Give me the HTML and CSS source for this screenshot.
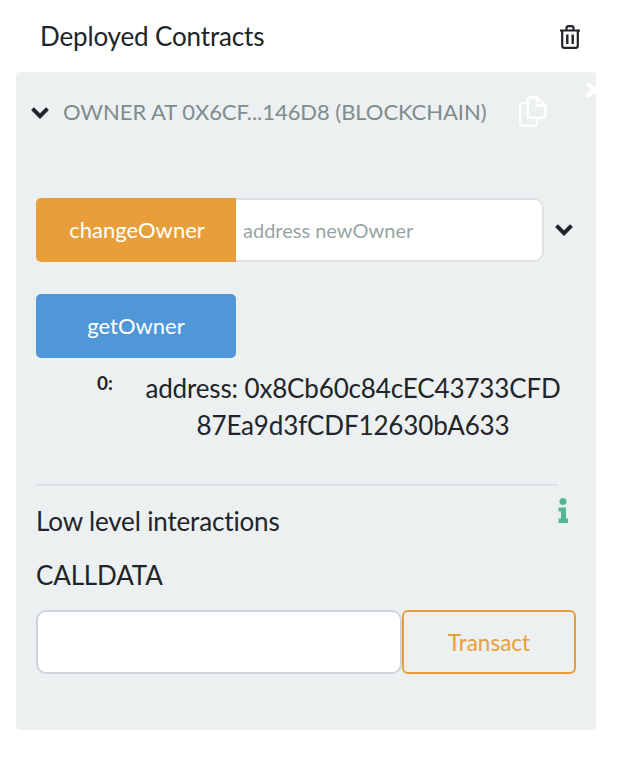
FILE: index.html
```html
<!DOCTYPE html>
<html lang="en">
  <head>
    <meta charset="UTF-8" />
    <meta name="viewport" content="width=device-width, initial-scale=1.0" />
    <title>Deployed Contracts</title>
    <link rel="stylesheet" href="styles.css">
  </head>
  <body>
    <div class="header">
      <div class="header-title">Deployed Contracts</div>
      <svg class="trash-icon" viewBox="0 0 22 24" width="22" height="24">
        <path d="M1 5.5h20M7.5 5V3.2C7.5 2 8.3 1.2 9.5 1.2h3c1.2 0 2 .8 2 2V5M3.2 5.5v15.3c0 1.2.8 2 2 2h11.6c1.2 0 2-.8 2-2V5.500" fill="none" stroke="#212529" stroke-width="2.200" />
        <path d="M8.300 9.500v9.500M13.700 9.500v9.500" fill="none" stroke="#212529" stroke-width="2.400" />
      </svg>
    </div>

    <div class="contract">
      <!-- close button, cut off by the panel edge -->
      <svg class="close-icon" viewBox="0 0 16 16" width="16" height="16">
        <path d="M2.500 2.500l11 11M13.500 2.500l-11 11" fill="none" stroke="#fff" stroke-width="4" stroke-linecap="round" />
      </svg>

      <div class="contract-title">
        <svg class="chevron" viewBox="0 0 20 13" width="20" height="13">
          <path d="M2.500 2.700l7.500 7.500 7.500-7.500" fill="none" stroke="#212529" stroke-width="4" />
        </svg>
        <div class="contract-name">OWNER AT 0X6CF...146D8 (BLOCKCHAIN)</div>
        <svg class="copy-icon" viewBox="0 0 28 31" width="28" height="31">
          <path d="M8.700 7H3.500C2 7 1.200 7.800 1.200 9.300v18.400c0 1.500.8 2.300 2.300 2.300h12c1.500 0 2.300-.8 2.300-2.300V22" fill="none" stroke="#fff" stroke-width="2.400" />
          <path d="M18 1.200h-7c-1.500 0-2.300.8-2.300 2.300v16c0 1.500.8 2.300 2.300 2.300h13c1.500 0 2.300-.8 2.300-2.300V9.500zM18 1.200V9.500h8.300" fill="none" stroke="#fff" stroke-width="2.400" />
        </svg>
      </div>

      <div class="function-row">
        <div class="function-group">
          <button class="btn-orange">changeOwner</button>
          <input class="function-input" type="text" placeholder="address newOwner" />
        </div>
        <svg class="chevron" viewBox="0 0 20 13" width="20" height="13">
          <path d="M2.500 2.700l7.500 7.500 7.500-7.500" fill="none" stroke="#212529" stroke-width="4" />
        </svg>
      </div>

      <button class="btn-blue">getOwner</button>

      <div class="result">
        <div class="result-key">0:</div>
        <div class="result-value">address: 0x8Cb60c84cEC43733CFD 87Ea9d3fCDF12630bA633</div>
      </div>

      <div class="low-level">
        <div class="low-level-head">
          <div class="low-level-title">Low level interactions</div>
          <svg class="info-icon" viewBox="0 0 10 26" width="10" height="26">
            <circle cx="5" cy="3.500" r="3.500" fill="#53b795" />
            <path d="M0.500 9.500h7.500v11h2v4.500H0.500v-4.500h2.500v-7H0.500z" fill="#53b795" />
          </svg>
        </div>
        <div class="calldata-label">CALLDATA</div>
        <div class="calldata-row">
          <input class="calldata-input" type="text" />
          <button class="btn-transact">Transact</button>
        </div>
      </div>
    </div>
  </body>
</html>
```

FILE: styles.css
```css
* {
  box-sizing: border-box;
}

body {
  margin: 0;
  background-color: #fff;
  font-family: Lato, "Liberation Sans", sans-serif;
  color: #212529;
}

.header {
  height: 72px;
  display: flex;
  align-items: center;
  justify-content: space-between;
  padding: 0 41px 0 40px;
}

.header-title {
  font-size: 26px;
  letter-spacing: -0.15px;
}

.trash-icon {
  margin-top: 2px;
}

.contract {
  position: relative;
  width: 580px;
  height: 658px;
  margin-left: 16px;
  padding: 0 20px;
  background-color: #ecf0f1;
  border-radius: 4px;
  overflow: hidden;
}

.close-icon {
  position: absolute;
  top: 10px;
  right: -6px;
}

.contract-title {
  height: 80px;
  display: flex;
  align-items: center;
}

.contract-title .chevron {
  margin-left: -6px;
}

.contract-name {
  margin-left: 13px;
  margin-bottom: 2px;
  font-size: 22px;
  letter-spacing: -0.05px;
  color: #7f8c8d;
  white-space: nowrap;
}

.copy-icon {
  margin-left: 32px;
  margin-top: -2px;
}

.function-row {
  display: flex;
  align-items: center;
  margin-top: 46px;
}

.function-group {
  width: 508px;
  height: 64px;
  display: flex;
}

.function-row .chevron {
  margin-left: 10px;
  margin-top: -2px;
}

button {
  font-family: inherit;
  cursor: pointer;
}

.btn-orange {
  width: 200px;
  padding: 0 0 2px 2px;
  border: none;
  border-radius: 5px 0 0 5px;
  background-color: #e89f3a;
  color: #fff;
  font-size: 22px;
}

.function-input {
  flex: 1;
  min-width: 0;
  padding: 0 7px;
  border: 2px solid #dfe1e5;
  border-left: none;
  border-radius: 0 10px 10px 0;
  background-color: #fff;
  font-family: inherit;
  font-size: 20px;
}

.function-input::placeholder {
  color: #95a5a6;
  opacity: 1;
}

.btn-blue {
  display: block;
  width: 200px;
  height: 64px;
  margin-top: 32px;
  padding: 0 0 2px;
  border: none;
  border-radius: 5px;
  background-color: #4f97d8;
  color: #fff;
  font-size: 22px;
}

.result {
  display: flex;
  margin-top: 12px;
}

.result-key {
  width: 108px;
  padding: 1px 0 0 61px;
  font-size: 19px;
  font-weight: bold;
}

.result-value {
  width: 418px;
  font-size: 26px;
  letter-spacing: -0.15px;
  line-height: 37px;
  text-align: center;
  word-break: break-word;
}

.low-level {
  margin-top: 40px;
}

.low-level-head {
  width: 522px;
  height: 75px;
  display: flex;
  justify-content: space-between;
  padding-top: 12px;
  border-top: 2px solid #dee2e6;
}

.low-level-title {
  padding-top: 7px;
  font-size: 26px;
  letter-spacing: -0.15px;
}

.info-icon {
  margin-right: -10px;
}

.calldata-label {
  font-size: 26px;
  letter-spacing: -0.15px;
}

.calldata-row {
  display: flex;
  margin-top: 19px;
}

.calldata-input {
  width: 366px;
  height: 64px;
  border: 2px solid #ced4da;
  border-radius: 10px;
  background-color: #fff;
}

.btn-transact {
  flex: 1;
  height: 64px;
  border: 2px solid #e89f3a;
  border-radius: 6px;
  background: transparent;
  color: #e89f3a;
  font-size: 22.500px;
}
```
